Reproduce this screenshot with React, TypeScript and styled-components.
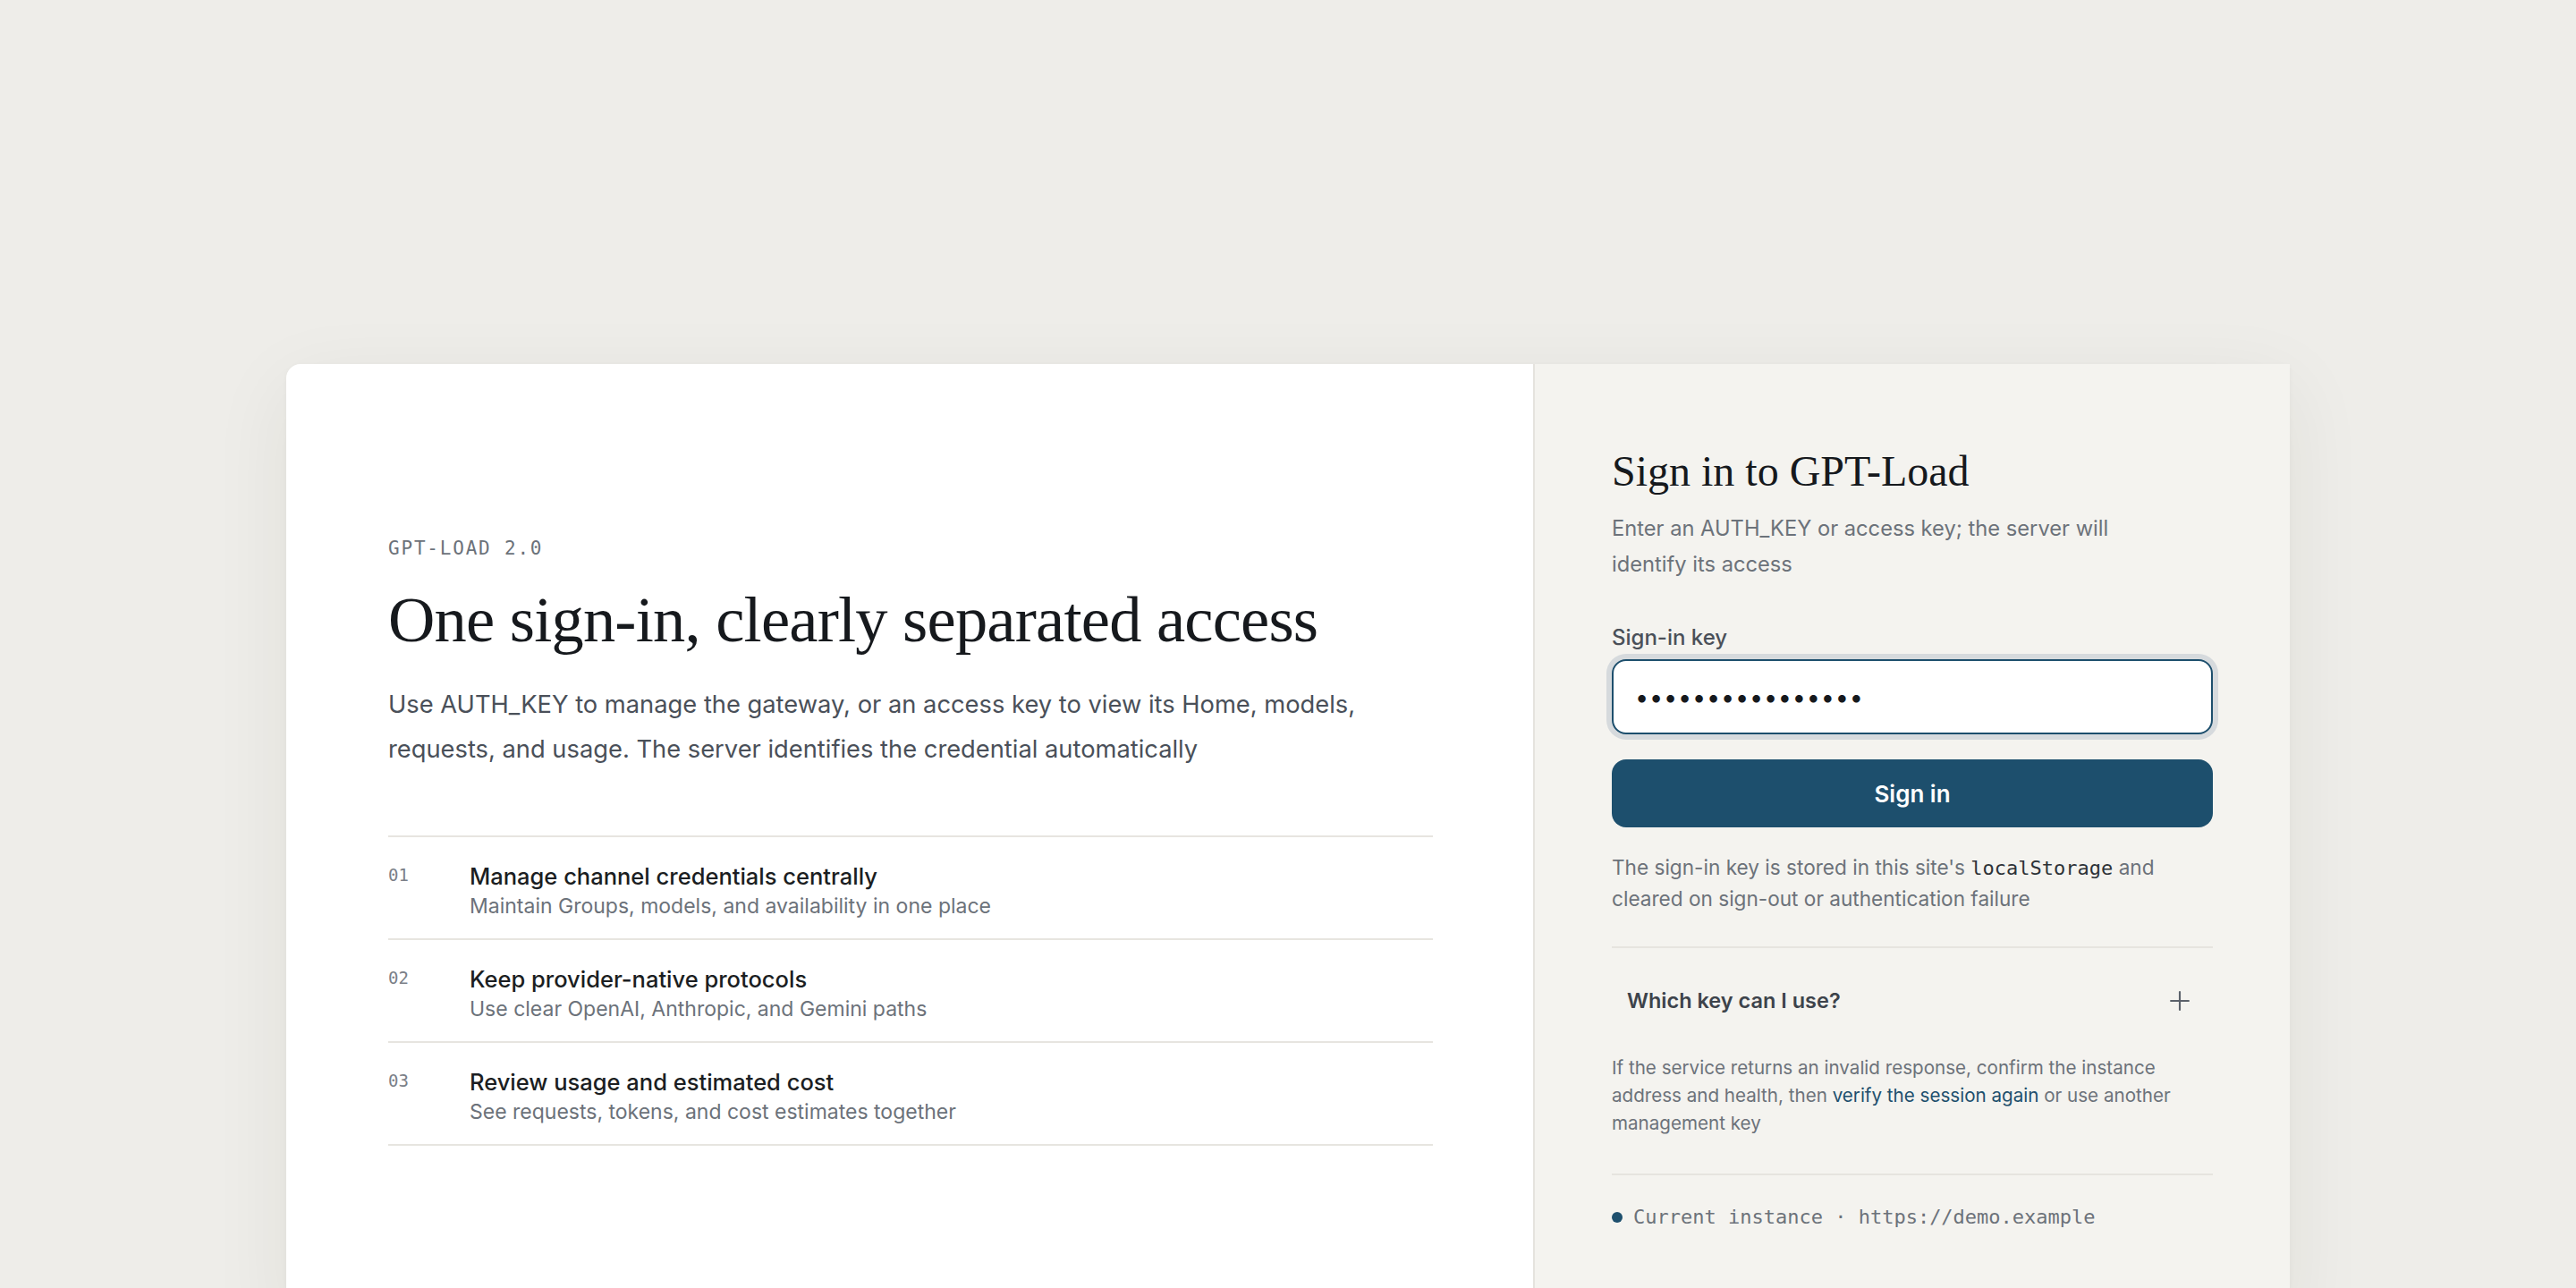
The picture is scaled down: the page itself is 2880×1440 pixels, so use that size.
import React, { useEffect, useRef } from 'react';
import styled, { createGlobalStyle } from 'styled-components';
import { Plus } from 'lucide-react';

const SANS = `Inter, "Noto Sans", "Liberation Sans", sans-serif`;
const SERIF = `"Liberation Serif", "DejaVu Serif", serif`;
const MONO = `"DejaVu Sans Mono", "Liberation Mono", monospace`;

const GlobalStyle = createGlobalStyle`
  * {
    box-sizing: border-box;
  }

  html,
  body {
    margin: 0;
    padding: 0;
    background: #eeede9;
    font-family: ${SANS};
    color: #1b1e22;
  }
`;

const features = [
  {
    no: '01',
    title: 'Manage channel credentials centrally',
    desc: 'Maintain Groups, models, and availability in one place',
  },
  {
    no: '02',
    title: 'Keep provider-native protocols',
    desc: 'Use clear OpenAI, Anthropic, and Gemini paths',
  },
  {
    no: '03',
    title: 'Review usage and estimated cost',
    desc: 'See requests, tokens, and cost estimates together',
  },
];

const App: React.FC = () => {
  const inputRef = useRef<HTMLInputElement>(null);

  useEffect(() => {
    const el = inputRef.current;
    if (el) {
      el.focus();
      el.setSelectionRange(el.value.length, el.value.length);
    }
  }, []);

  return (
    <Page>
      <GlobalStyle />
      <Card>
        <Intro>
          <Eyebrow>GPT-LOAD 2.0</Eyebrow>
          <Headline>One sign-in, clearly separated access</Headline>
          <Lead>
            Use AUTH_KEY to manage the gateway, or an access key to view its Home, models,
            requests, and usage. The server identifies the credential automatically
          </Lead>
          <FeatureList>
            {features.map((f) => (
              <FeatureRow key={f.no}>
                <FeatureNo>{f.no}</FeatureNo>
                <div>
                  <FeatureTitle>{f.title}</FeatureTitle>
                  <FeatureDesc>{f.desc}</FeatureDesc>
                </div>
              </FeatureRow>
            ))}
          </FeatureList>
        </Intro>

        <Aside>
          <FormTitle>Sign in to GPT-Load</FormTitle>
          <FormSub>Enter an AUTH_KEY or access key; the server will identify its access</FormSub>

          <Field>
            <Label htmlFor="key">Sign-in key</Label>
            <KeyInput
              id="key"
              ref={inputRef}
              type="password"
              defaultValue="sk-demo-12345678"
            />
          </Field>

          <SubmitButton type="button">Sign in</SubmitButton>

          <Note>
            The sign-in key is stored in this site's <Code>localStorage</Code> and cleared on
            sign-out or authentication failure
          </Note>

          <Divider />

          <Disclosure>
            <span>Which key can I use?</span>
            <Plus size={34} strokeWidth={1.5} />
          </Disclosure>

          <Help>
            If the service returns an invalid response, confirm the instance address and
            health, then <HelpLink href="#">verify the session again</HelpLink> or use another
            management key
          </Help>

          <Divider $gap={41} />

          <Instance>
            <StatusDot />
            <span>Current instance · https://demo.example</span>
          </Instance>
        </Aside>
      </Card>
    </Page>
  );
};

export default App;

const Page = styled.div`
  min-height: 100vh;
  padding: 407px 320px 0;
`;

const Card = styled.div`
  display: grid;
  grid-template-columns: 1394px 1fr;
  max-width: 2240px;
  margin: 0 auto;
  min-height: 1066px;
  border-radius: 16px 0 0 0;
  box-shadow: 0 24px 90px rgba(40, 38, 30, 0.07), 0 2px 6px rgba(40, 38, 30, 0.03);
`;

const Intro = styled.section`
  display: flex;
  flex-direction: column;
  justify-content: center;
  padding: 0 112px 0 114px;
  background: #ffffff;
  border-radius: 16px 0 0 0;
`;

const Eyebrow = styled.div`
  font-family: ${MONO};
  font-size: 21px;
  line-height: 28px;
  letter-spacing: 1.8px;
  color: #6c727a;
`;

const Headline = styled.h1`
  margin: 22px 0 0;
  font-family: ${SERIF};
  font-size: 72.5px;
  font-weight: 400;
  line-height: 88px;
  letter-spacing: -0.8px;
  color: #16191d;
`;

const Lead = styled.p`
  margin: 26px 0 0;
  font-size: 27.3px;
  line-height: 50px;
  color: #4a5059;
`;

const FeatureList = styled.div`
  margin-top: 71px;
  border-bottom: 2px solid #e7e5e0;
`;

const FeatureRow = styled.div`
  display: grid;
  grid-template-columns: 91px 1fr;
  padding: 27px 0 20px;
  border-top: 2px solid #e7e5e0;
`;

const FeatureNo = styled.div`
  font-family: ${MONO};
  font-size: 19px;
  line-height: 30px;
  color: #7b8088;
`;

const FeatureTitle = styled.div`
  font-size: 25.5px;
  font-weight: 500;
  line-height: 34px;
  color: #1b1e22;
`;

const FeatureDesc = styled.div`
  font-size: 23px;
  line-height: 32px;
  color: #6c727a;
`;

const Aside = styled.section`
  display: flex;
  flex-direction: column;
  padding: 90px 86px 80px;
  background: #f4f3ef;
  border-left: 2px solid #e5e3de;
`;

const FormTitle = styled.h2`
  margin: 0;
  font-family: ${SERIF};
  font-size: 48px;
  font-weight: 400;
  line-height: 60px;
  color: #16191d;
`;

const FormSub = styled.p`
  max-width: 600px;
  margin: 14px 0 0;
  font-size: 23.7px;
  line-height: 40px;
  color: #6c727a;
`;

const Field = styled.div`
  display: flex;
  flex-direction: column;
  gap: 9px;
  margin-top: 47px;
`;

const Label = styled.label`
  font-size: 24px;
  font-weight: 500;
  line-height: 30px;
  color: #4a5059;
`;

const KeyInput = styled.input`
  width: 100%;
  height: 84px;
  padding: 0 24px;
  border: 2px solid #1d4f6d;
  border-radius: 16px;
  background: #ffffff;
  box-shadow: 0 0 0 6px #d6dadd;
  outline: none;
  font-family: ${SANS};
  font-size: 27px;
  letter-spacing: 0.8px;
  color: #16191d;
  caret-color: #16191d;
`;

const SubmitButton = styled.button`
  height: 76px;
  margin-top: 28px;
  border: none;
  border-radius: 16px;
  background: #1d4f6d;
  color: #ffffff;
  font-family: ${SANS};
  font-size: 26px;
  font-weight: 600;
  cursor: pointer;
`;

const Note = styled.p`
  margin: 27px 0 0;
  font-size: 22.6px;
  line-height: 35px;
  color: #6c727a;
`;

const Code = styled.code`
  font-family: ${MONO};
  font-size: 22px;
  line-height: 1;
  color: #2d3237;
`;

const Divider = styled.hr<{ $gap?: number }>`
  width: 100%;
  margin: ${({ $gap }) => $gap ?? 36}px 0 0;
  border: none;
  border-top: 2px solid #e6e4df;
`;

const Disclosure = styled.div`
  display: flex;
  align-items: center;
  justify-content: space-between;
  padding: 42px 20px 42px 17px;
  font-size: 23.5px;
  font-weight: 600;
  line-height: 34px;
  color: #3d434b;

  svg {
    color: #5b616a;
  }
`;

const Help = styled.p`
  margin: 0;
  font-size: 20.6px;
  line-height: 31px;
  color: #6c727a;
`;

const HelpLink = styled.a`
  color: #1d4f6d;
  text-decoration: none;
  line-height: 1;
`;

const Instance = styled.div`
  display: flex;
  align-items: center;
  gap: 12px;
  margin-top: 32px;
  font-family: ${MONO};
  font-size: 22px;
  line-height: 30px;
  color: #6c727a;
`;

const StatusDot = styled.span`
  width: 12px;
  height: 12px;
  border-radius: 50%;
  background: #1d4f6d;
  flex-shrink: 0;
`;
